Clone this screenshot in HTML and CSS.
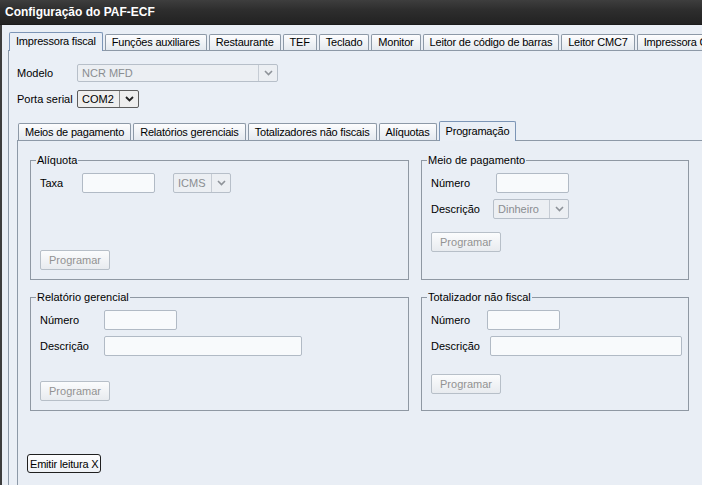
FILE: index.html
```html
<!DOCTYPE html>
<html lang="pt-BR">
<head>
<meta charset="utf-8">
<title>Configuração do PAF-ECF</title>
<link rel="stylesheet" href="styles.css">
</head>
<body>
<div class="titlebar">Configuração do PAF-ECF</div>
<div class="window">
  <div class="tabs top-tabs">
    <div class="tab active">Impressora fiscal</div>
    <div class="tab">Funções auxiliares</div>
    <div class="tab">Restaurante</div>
    <div class="tab">TEF</div>
    <div class="tab">Teclado</div>
    <div class="tab">Monitor</div>
    <div class="tab">Leitor de código de barras</div>
    <div class="tab">Leitor CMC7</div>
    <div class="tab">Impressora Cheque</div>
  </div>
  <div class="panel-outer">
    <div class="frow">
      <span class="lbl lbl-60">Modelo</span>
      <div class="combo combo-sm disabled w201">
        <span class="combo-text">NCR MFD</span>
        <span class="combo-arrow"><svg width="9" height="6" viewBox="0 0 9 6"><polyline points="1,1 4.5,4.5 8,1" fill="none" stroke="currentColor" stroke-width="1.6"/></svg></span>
      </div>
    </div>
    <div class="frow">
      <span class="lbl lbl-60">Porta serial</span>
      <div class="combo combo-sm enabled w62">
        <span class="combo-text">COM2</span>
        <span class="combo-arrow"><svg width="9" height="6" viewBox="0 0 9 6"><polyline points="1,1 4.5,4.5 8,1" fill="none" stroke="currentColor" stroke-width="1.8"/></svg></span>
      </div>
    </div>

    <div class="tabs inner-tabs">
      <div class="tab">Meios de pagamento</div>
      <div class="tab">Relatórios gerenciais</div>
      <div class="tab">Totalizadores não fiscais</div>
      <div class="tab">Alíquotas</div>
      <div class="tab active">Programação</div>
    </div>
    <div class="panel-inner">
      <div class="groups">
        <fieldset class="group">
          <legend>Alíquota</legend>
          <div class="gbody">
            <div class="frow">
              <span class="lbl lbl-42">Taxa</span>
              <input type="text" class="txt w73">
              <div class="combo disabled w58 ml18">
                <span class="combo-text">ICMS</span>
                <span class="combo-arrow"><svg width="9" height="6" viewBox="0 0 9 6"><polyline points="1,1 4.5,4.5 8,1" fill="none" stroke="currentColor" stroke-width="1.6"/></svg></span>
              </div>
            </div>
            <button class="btn-prog push-bottom" disabled>Programar</button>
          </div>
        </fieldset>

        <fieldset class="group">
          <legend>Meio de pagamento</legend>
          <div class="gbody">
            <div class="frow">
              <span class="lbl lbl-65">Número</span>
              <input type="text" class="txt w73">
            </div>
            <div class="frow">
              <span class="lbl lbl-62">Descrição</span>
              <div class="combo disabled w76">
                <span class="combo-text">Dinheiro</span>
                <span class="combo-arrow"><svg width="9" height="6" viewBox="0 0 9 6"><polyline points="1,1 4.5,4.5 8,1" fill="none" stroke="currentColor" stroke-width="1.6"/></svg></span>
              </div>
            </div>
            <button class="btn-prog mt13" disabled>Programar</button>
          </div>
        </fieldset>

        <fieldset class="group">
          <legend>Relatório gerencial</legend>
          <div class="gbody">
            <div class="frow">
              <span class="lbl lbl-64">Número</span>
              <input type="text" class="txt w73">
            </div>
            <div class="frow">
              <span class="lbl lbl-64">Descrição</span>
              <input type="text" class="txt w198">
            </div>
            <button class="btn-prog push-bottom" disabled>Programar</button>
          </div>
        </fieldset>

        <fieldset class="group">
          <legend>Totalizador não fiscal</legend>
          <div class="gbody">
            <div class="frow">
              <span class="lbl lbl-56">Número</span>
              <input type="text" class="txt w73">
            </div>
            <div class="frow">
              <span class="lbl lbl-59">Descrição</span>
              <input type="text" class="txt w192">
            </div>
            <button class="btn-prog mt18" disabled>Programar</button>
          </div>
        </fieldset>
      </div>
      <button class="btn-main">Emitir leitura X</button>
    </div>
  </div>
</div>
</body>
</html>
```

FILE: styles.css
```css
* { box-sizing: border-box; }

html, body { margin: 0; padding: 0; }

body {
  width: 702px;
  height: 485px;
  overflow: hidden;
  background: #e9eef5;
  font-family: "Liberation Sans", Arial, sans-serif;
  font-size: 11px;
  color: #000;
}

.titlebar {
  height: 25px;
  line-height: 25px;
  padding-left: 5px;
  color: #fff;
  font-size: 12px;
  font-weight: bold;
  background: linear-gradient(#3e3e3e 0%, #2e2e2e 40%, #222 100%);
  border-bottom: 1px solid #1b1b1b;
}

.window {
  height: 460px;
  border-left: 2px solid #3d3d3d;
  padding: 7px 0 0 6px;
  display: flex;
  flex-direction: column;
}

.tabs {
  display: flex;
  align-items: flex-end;
  gap: 2px;
  white-space: nowrap;
  margin-bottom: -1px;
  flex: none;
}

.top-tabs { height: 19px; margin-left: 1px; }
.inner-tabs { height: 20px; margin: 13px 0 -1px 1px; }

.tab {
  flex: none;
  height: 16px;
  margin-bottom: 1px;
  line-height: 15px;
  padding: 0 6px;
  border: 1px solid #8d99a7;
  border-bottom: none;
  border-radius: 2px 2px 0 0;
  background: linear-gradient(#fdfdfe, #e4e9ef);
  text-align: center;
  letter-spacing: -0.2px;
}

.inner-tabs .tab { height: 17px; line-height: 16px; }

.tab.active {
  position: relative;
  z-index: 1;
  height: 19px;
  margin-bottom: 0;
  line-height: 17px;
  background: #eaeff6;
  border-color: #7c95b6;
}

.inner-tabs .tab.active { height: 20px; line-height: 18px; }

.panel-outer {
  flex: 1;
  min-height: 0;
  border-top: 1px solid #8d99a7;
  border-left: 1px solid #8d99a7;
  background: #eaeff6;
  padding: 13px 0 0 8px;
  display: flex;
  flex-direction: column;
}

.panel-inner {
  flex: 1;
  min-height: 0;
  border-top: 1px solid #8d99a7;
  border-left: 1px solid #8d99a7;
  background: #e9eef5;
  padding: 13px 0 0 0;
  display: flex;
  flex-direction: column;
}

.frow { display: flex; align-items: center; flex: none; }
.panel-outer > .frow + .frow { margin-top: 8px; }
.gbody .frow + .frow { margin-top: 6px; }

.lbl { flex: none; white-space: nowrap; }
.lbl-60 { width: 60px; }
.lbl-42 { width: 42px; }
.lbl-65 { width: 65px; }
.lbl-62 { width: 62px; }
.lbl-64 { width: 64px; }
.lbl-56 { width: 56px; }
.lbl-59 { width: 59px; }

.w201 { width: 201px; }
.w62 { width: 62px; }
.w58 { width: 58px; }
.w76 { width: 76px; }
.w73 { width: 73px; }
.w198 { width: 198px; }
.w192 { width: 192px; }
.ml18 { margin-left: 18px; }

.txt {
  height: 20px;
  margin: 0;
  padding: 0 3px;
  border: 1px solid #b1bac5;
  border-radius: 2px;
  background: #f8fafc;
  font: inherit;
}

.combo {
  flex: none;
  display: flex;
  height: 20px;
  border: 1px solid #b7bfc9;
  border-radius: 2px;
  background: #eceff3;
  color: #8a8d91;
}

.combo-sm { height: 18px; }

.combo-text {
  flex: 1;
  padding-left: 4px;
  line-height: 18px;
  overflow: hidden;
  white-space: nowrap;
}

.combo-sm .combo-text { line-height: 16px; }

.combo-arrow {
  flex: none;
  width: 19px;
  border-left: 1px solid #c6ccd4;
  display: flex;
  align-items: center;
  justify-content: center;
  color: #8e9399;
}

.combo.enabled {
  border-color: #5c5c5c;
  background: #eeeeee;
  color: #000;
}

.combo.enabled .combo-arrow {
  border-left-color: #8a8a8a;
  color: #222;
}

.groups {
  display: grid;
  grid-template-columns: 379px 268px;
  grid-template-rows: 126px 120px;
  column-gap: 12px;
  row-gap: 11px;
  margin-left: 12px;
  flex: none;
}

fieldset.group {
  margin: 0;
  padding: 0;
  min-width: 0;
  border: 1px solid #8f98a3;
  display: flex;
  flex-direction: column;
}

fieldset.group legend {
  margin-left: 5px;
  padding: 0 1px;
  line-height: 13px;
  font-size: 11px;
}

.gbody {
  flex: 1;
  display: flex;
  flex-direction: column;
  padding: 6px 0 9px 9px;
}

.btn-prog {
  flex: none;
  width: 70px;
  height: 20px;
  margin: 0;
  padding: 0;
  border: 1px solid #b7bfc8;
  border-radius: 2px;
  background: linear-gradient(#fbfcfd, #e8ebef);
  color: #929292;
  font: inherit;
}

.btn-prog.push-bottom { margin-top: auto; }
.btn-prog.mt13 { margin-top: 13px; }
.btn-prog.mt18 { margin-top: 18px; }

.btn-main {
  align-self: flex-start;
  flex: none;
  height: 19px;
  margin: 43px 0 0 9px;
  padding: 0 2px;
  border: 1px solid #1f1f1f;
  border-radius: 3px;
  background: linear-gradient(#fdfdfe, #eef1f5);
  color: #000;
  font: inherit;
  letter-spacing: -0.2px;
  white-space: nowrap;
}
```
